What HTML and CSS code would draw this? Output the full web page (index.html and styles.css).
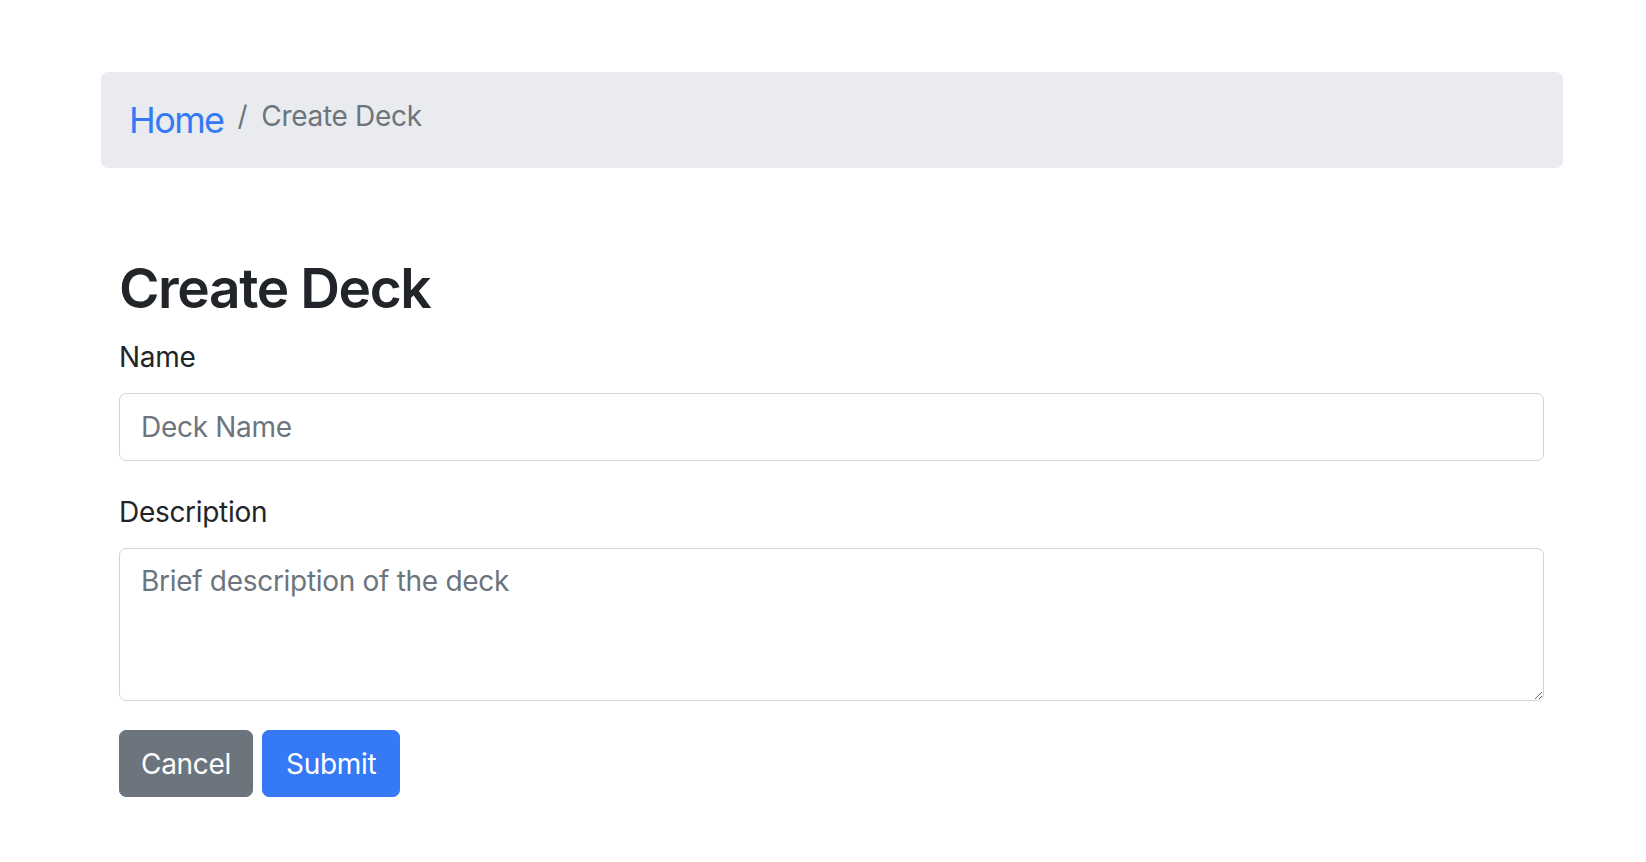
FILE: index.html
```html
<!DOCTYPE html>
<html lang="en">
<head>
<meta charset="utf-8">
<title>Create Deck</title>
<link rel="stylesheet" href="styles.css">
</head>
<body>
<div class="container">
  <nav aria-label="breadcrumb">
    <ol class="breadcrumb">
      <li class="breadcrumb-item home"><a href="#">Home</a></li>
      <li class="breadcrumb-item active" aria-current="page">Create Deck</li>
    </ol>
  </nav>
  <main class="content">
    <h1 class="title">Create Deck</h1>
    <form class="deck-form">
      <div class="form-group">
        <label for="name" class="form-label">Name</label>
        <input id="name" class="form-control" type="text" placeholder="Deck Name">
      </div>
      <div class="form-group">
        <label for="description" class="form-label">Description</label>
        <textarea id="description" class="form-control textarea" rows="3" placeholder="Brief description of the deck"></textarea>
      </div>
      <div class="actions">
        <button type="button" class="btn btn-secondary">Cancel</button>
        <button type="submit" class="btn btn-primary">Submit</button>
      </div>
    </form>
  </main>
</div>
</body>
</html>
```

FILE: styles.css
```css
* { box-sizing: border-box; }

html, body {
  margin: 0;
  padding: 0;
  background: #ffffff;
}

body {
  font-family: Inter, "Liberation Sans", sans-serif;
  font-size: 28px;
  line-height: 1.5;
  letter-spacing: -0.3px;
  color: #212529;
}

.container {
  width: 1462px;
  margin-left: 101px;
  padding-top: 72px;
}

.breadcrumb {
  display: flex;
  align-items: flex-start;
  list-style: none;
  margin: 0;
  padding: 21px 28px;
  background: #e9ebee;
  border-radius: 7px;
}

.breadcrumb-item {
  font-size: 28px;
  line-height: 42px;
  color: #6c757d;
}

.breadcrumb-item.active {
  padding-top: 2px;
}

.breadcrumb-item.home {
  font-size: 36px;
  line-height: 54px;
  letter-spacing: -1.6px;
}

.breadcrumb-item a {
  color: #3579f6;
  text-decoration: none;
}

.breadcrumb-item + .breadcrumb-item {
  padding-left: 14px;
}

.breadcrumb-item + .breadcrumb-item::before {
  content: "/";
  padding-right: 14px;
  color: #6c757d;
}

.content {
  padding: 87px 19px 40px 18px;
}

.title {
  margin: 0 0 14px 0;
  font-size: 55px;
  line-height: 67px;
  font-weight: 600;
  letter-spacing: -1.4px;
  color: #212529;
}

.form-group {
  margin-bottom: 30px;
}

.form-label {
  display: block;
  margin-bottom: 15px;
  font-size: 28px;
  line-height: 42px;
}

.form-control {
  display: block;
  width: 100%;
  margin: 0;
  padding: 12px 21px;
  font-family: inherit;
  font-size: 28px;
  line-height: 42px;
  letter-spacing: -0.3px;
  color: #495057;
  background: #fff;
  border: 1px solid #ced4da;
  border-radius: 7px;
  outline: none;
}

.form-control::placeholder {
  color: #6c757d;
  opacity: 1;
}

.textarea {
  height: 153px;
  padding-top: 11px;
  resize: vertical;
}

.actions {
  display: flex;
  gap: 9px;
  margin-top: -1px;
}

.btn {
  font-family: inherit;
  font-size: 28px;
  line-height: 42px;
  letter-spacing: -0.3px;
  padding: 11.5px 21px;
  border: 1px solid transparent;
  border-radius: 7px;
  color: #fff;
  cursor: pointer;
}

.btn-secondary {
  background: #6c757d;
  border-color: #6c757d;
}

.btn-primary {
  padding-left: 23px;
  padding-right: 23px;
  background: #3579f6;
  border-color: #3579f6;
}
```
